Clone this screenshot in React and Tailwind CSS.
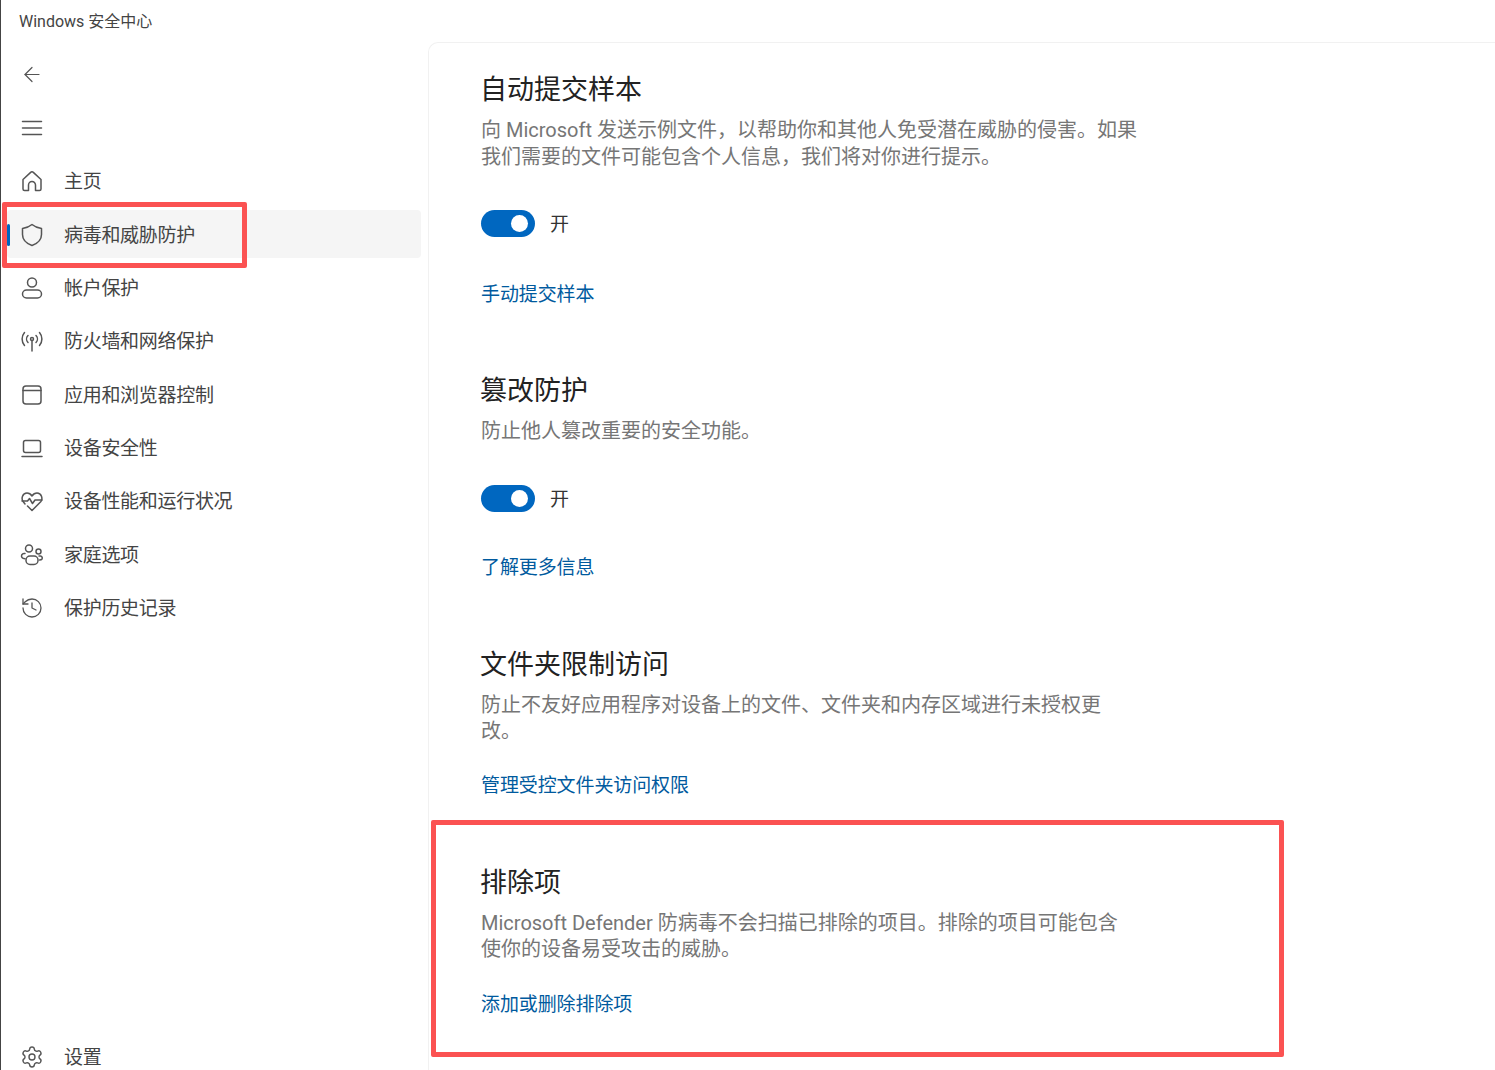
import React from 'react';
import { ArrowLeft, History, Settings } from 'lucide-react';

const cjk = { fontFamily: 'Roboto, "Noto Sans CJK SC", sans-serif' };

const Icon = ({ children }) => (
  <svg width="24" height="24" viewBox="0 0 24 24" fill="none" stroke="#555" strokeWidth="1.5" strokeLinecap="round" strokeLinejoin="round">
    {children}
  </svg>
);

const MenuIcon = () => (
  <Icon>
    <path d="M2.500 5.500h19M2.500 12h19M2.500 18.500h19" />
  </Icon>
);
const HomeIcon = () => (
  <Icon>
    <path d="M3 10.5 10.4 3.6a2.3 2.3 0 0 1 3.2 0L21 10.5V20a1.5 1.5 0 0 1-1.5 1.5h-4V16a3.5 3.5 0 0 0-7 0v5.500h-4A1.500 1.500 0 0 1 3 20z" />
  </Icon>
);
const ShieldIcon = () => (
  <Icon>
    <path d="M12 1.500C9 4 6 5 2.500 5.500V11.500C2.500 17 6.500 20.500 12 22.500C17.500 20.500 21.500 17 21.500 11.500V5.500C18 5 15 4 12 1.500Z" />
  </Icon>
);
const UserIcon = () => (
  <Icon>
    <circle cx="12" cy="6.500" r="4.500" />
    <rect x="2.500" y="14" width="19" height="8" rx="4" />
  </Icon>
);
const AntennaIcon = () => (
  <Icon>
    <circle cx="12" cy="10" r="1.500" />
    <path d="M12 11.500V22" />
    <path d="M8 6.500a5 5 0 0 0 0 7M16 6.500a5 5 0 0 1 0 7" />
    <path d="M4.500 3.500a10 10 0 0 0 0 13M19.500 3.500a10 10 0 0 1 0 13" />
  </Icon>
);
const BrowserIcon = () => (
  <Icon>
    <rect x="3" y="3" width="18" height="18" rx="3" />
    <path d="M3 7.500h18" />
  </Icon>
);
const LaptopIcon = () => (
  <Icon>
    <rect x="3.500" y="4.500" width="17" height="12" rx="2" />
    <path d="M2 20.500h20" />
  </Icon>
);
const HeartIcon = () => (
  <Icon>
    <path d="M5 15 3.300 12.800C.8 9.500 2.500 4 7 4c2.200 0 3.800 1.200 5 3 1.200-1.800 2.800-3 5-3 4.500 0 6.200 5.500 3.700 8.800L12 21.500 7.500 17" />
    <path d="M2 12h5.500l2-2.500 3 5 2.500-3.500h7" />
  </Icon>
);
const FamilyIcon = () => (
  <Icon>
    <circle cx="9" cy="5.500" r="3.500" />
    <circle cx="18.500" cy="8.500" r="2.500" />
    <path d="M5 10.500H4a2.500 2.500 0 0 0-2 4c.6.8 1.500 1.200 3 1.300" />
    <rect x="6" y="13" width="12" height="8.500" rx="4" />
    <path d="M19 13h1.500a2 2 0 0 1 1.500 3c-.4.600-1.200 1-2.500 1" />
  </Icon>
);

const navItems = [
  { label: '主页', icon: <HomeIcon /> },
  { label: '病毒和威胁防护', icon: <ShieldIcon />, active: true },
  { label: '帐户保护', icon: <UserIcon /> },
  { label: '防火墙和网络保护', icon: <AntennaIcon /> },
  { label: '应用和浏览器控制', icon: <BrowserIcon /> },
  { label: '设备安全性', icon: <LaptopIcon /> },
  { label: '设备性能和运行状况', icon: <HeartIcon /> },
  { label: '家庭选项', icon: <FamilyIcon /> },
  { label: '保护历史记录', icon: <History size={28} color="#555" strokeWidth={1.3} /> },
];

const NavRow = ({ item }) => (
  <div className="h-[53.33px] flex items-center shrink-0">
    <div className={`relative ml-[6px] w-[414px] h-[48px] flex items-center pl-[13px] pt-[2px] rounded-[4px] ${item.active ? 'bg-[#f5f5f5]' : ''}`}>
      {item.active && <div className="absolute left-0 top-[14px] w-[3px] h-[22px] rounded-full bg-[#0067c0]" />}
      <span className="w-[24px] h-[24px] flex items-center justify-center shrink-0">{item.icon}</span>
      {item.label && <span className="ml-[20px] mt-[2px] text-[19px] text-[#444] leading-[26px] tracking-[-0.3px]">{item.label}</span>}
    </div>
  </div>
);

const Toggle = ({ className }) => (
  <div className={`flex items-center ${className}`}>
    <div className="w-[54px] h-[27px] rounded-full bg-[#0067c0] flex items-center justify-end pr-[7px]">
      <div className="w-[17px] h-[17px] rounded-full bg-white" />
    </div>
    <span className="ml-[15px] translate-y-[1px] text-[19px] text-[#333] leading-[27px]">开</span>
  </div>
);

const Title = ({ className = '', children }) => (
  <h2 className={`-ml-[1px] pt-[1px] text-[27px] leading-[36px] text-[#222] ${className}`}>{children}</h2>
);

const Desc = ({ lines }) => (
  <p className="mt-[9px] text-[20px] leading-[26.5px] text-[#767676] whitespace-nowrap">
    {lines.map((line) => (
      <span key={line} className="block">{line}</span>
    ))}
  </p>
);

const Link = ({ className, children }) => (
  <a className={`block text-[19px] leading-[26px] text-[#005a9e] tracking-[-0.1px] ${className}`}>{children}</a>
);

export default function App() {
  return (
    <div className="relative w-[1495px] h-[1070px] overflow-hidden flex bg-white" style={cjk}>
      {/* sidebar */}
      <aside className="w-[428px] shrink-0 h-full flex flex-col border-l border-[#444] overflow-hidden">
        <div className="h-[47px] pt-[10px] pl-[18px] text-[16px] leading-[24px] text-[#444] shrink-0">Windows 安全中心</div>
        <NavRow item={{ icon: <ArrowLeft size={27} color="#555" strokeWidth={1.2} /> }} />
        <NavRow item={{ icon: <MenuIcon /> }} />
        {navItems.map((item) => (
          <NavRow key={item.label} item={item} />
        ))}
        <div className="mt-auto -mb-[13px]">
          <NavRow item={{ label: '设置', icon: <Settings size={24} color="#555" strokeWidth={1.4} /> }} />
        </div>
      </aside>

      {/* content card */}
      <main className="flex-1 mt-[42px] border-l border-t border-[#f1f1f1] rounded-tl-[10px] pl-[52px] pt-[28px] overflow-hidden">
        <Title>自动提交样本</Title>
        <Desc lines={['向 Microsoft 发送示例文件，以帮助你和其他人免受潜在威胁的侵害。如果', '我们需要的文件可能包含个人信息，我们将对你进行提示。']} />
        <Toggle className="mt-[40px]" />
        <Link className="mt-[45px]">手动提交样本</Link>

        <Title className="mt-[64px]">篡改防护</Title>
        <Desc lines={['防止他人篡改重要的安全功能。']} />
        <Toggle className="mt-[40px]" />
        <Link className="mt-[43px]">了解更多信息</Link>

        <Title className="mt-[65px]">文件夹限制访问</Title>
        <Desc lines={['防止不友好应用程序对设备上的文件、文件夹和内存区域进行未授权更', '改。']} />
        <Link className="mt-[28px]">管理受控文件夹访问权限</Link>

        <Title className="mt-[65px]">排除项</Title>
        <Desc lines={['Microsoft Defender 防病毒不会扫描已排除的项目。排除的项目可能包含', '使你的设备易受攻击的威胁。']} />
        <Link className="mt-[29px]">添加或删除排除项</Link>
      </main>

      {/* red annotation boxes */}
      <div className="absolute left-[2px] top-[202px] w-[245px] h-[66px] border-[5px] border-[#fb5252] rounded-[2px]" />
      <div className="absolute left-[431px] top-[820px] w-[853px] h-[237px] border-[5px] border-[#fb5252] rounded-[2px]" />
    </div>
  );
}
